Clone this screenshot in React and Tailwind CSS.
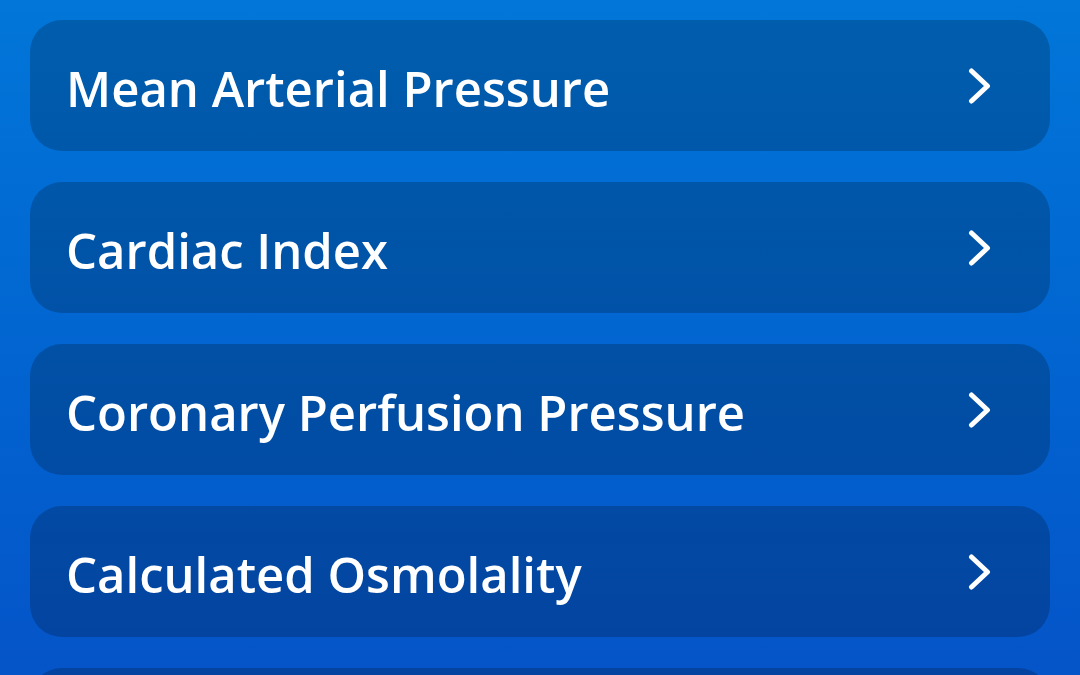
import React from "react";

const items = [
  "Mean Arterial Pressure",
  "Cardiac Index",
  "Coronary Perfusion Pressure",
  "Calculated Osmolality",
];

function Chevron() {
  return (
    <svg width="24" height="38" viewBox="0 0 24 38" fill="none" className="shrink-0">
      <polyline
        points="4.5,4 20.5,19 4.5,34"
        stroke="white"
        strokeWidth="5"
        strokeLinecap="round"
        strokeLinejoin="round"
      />
    </svg>
  );
}

export default function App() {
  return (
    <div
      className="w-[1080px] h-[675px] overflow-hidden bg-gradient-to-b from-[#0276d9] to-[#0554c8] px-[30px] pt-[20px] flex flex-col gap-[31px]"
      style={{ fontFamily: '"Open Sans", "Noto Sans", sans-serif' }}
    >
      {items.map((t) => (
        <div
          key={t}
          className="h-[131px] shrink-0 rounded-[32px] bg-black/20 flex items-center justify-between pl-[36px] pr-[59px]"
        >
          <span className="text-white text-[49px] font-semibold leading-none pt-[6px]">{t}</span>
          <Chevron />
        </div>
      ))}
      <div className="h-[131px] shrink-0 rounded-[32px] bg-black/20" />
    </div>
  );
}
